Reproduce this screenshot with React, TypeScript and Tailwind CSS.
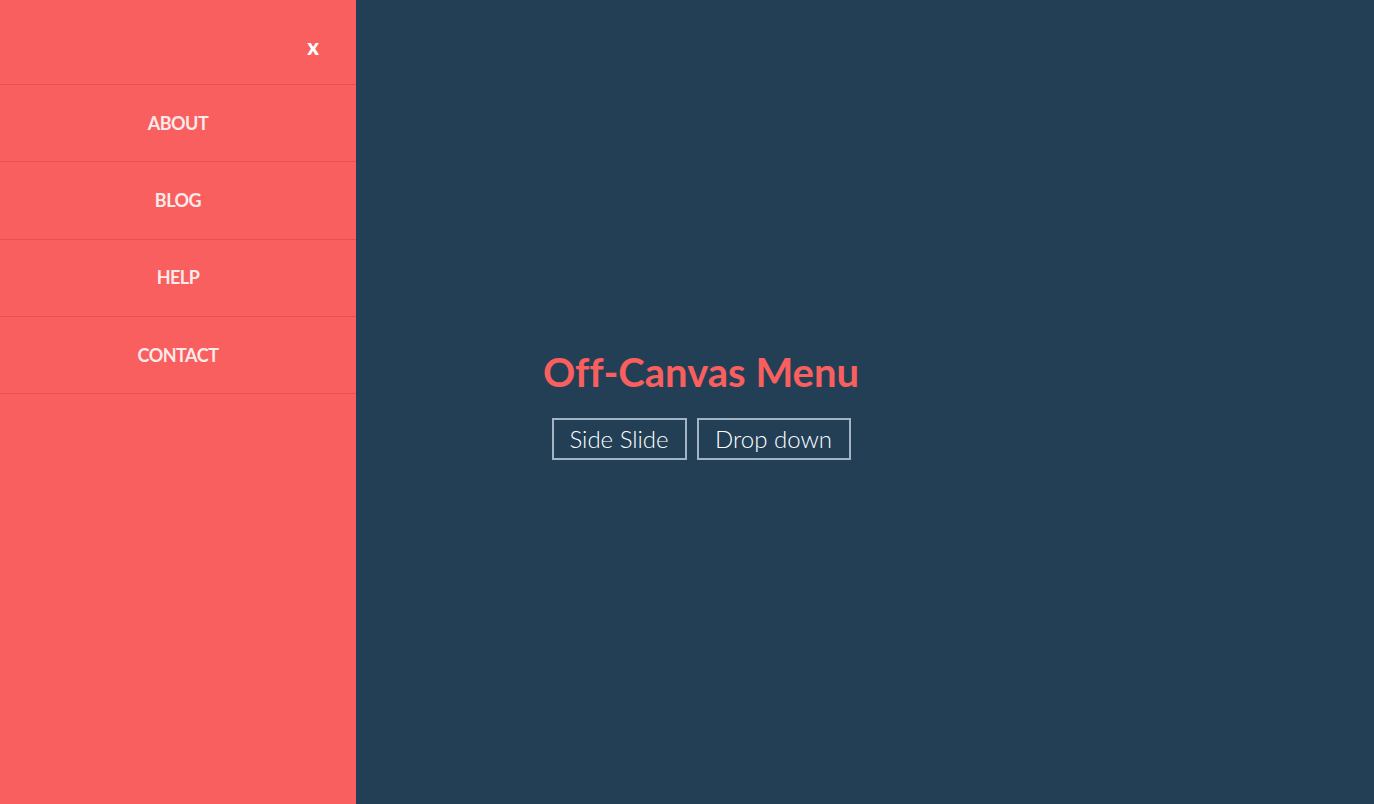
const links = ["ABOUT", "BLOG", "HELP", "CONTACT"];

const App = () => {
    return (
        <div className="flex h-screen w-full overflow-hidden font-['Lato','Liberation_Sans',sans-serif]">
            {/* off-canvas menu */}
            <aside className="w-[356px] shrink-0 bg-[#f95f5e]">
                <div className="flex h-[85px] items-center justify-end border-b border-[#e84f50] pr-[37px]">
                    <button className="pt-[10px] text-[22px] font-black leading-none text-white">x</button>
                </div>
                <ul>
                    {links.map((link) => (
                        <li key={link} className="flex h-[77.3px] items-center justify-center border-b border-[#e84f50]">
                            <a className="text-[18px] font-bold tracking-[-0.5px] text-[#fbeaea]">{link}</a>
                        </li>
                    ))}
                </ul>
            </aside>

            {/* page content */}
            <main className="flex flex-1 flex-col items-center justify-center bg-[#223f56] pr-[328px] pt-[8px]">
                <h1 className="text-[40px] font-bold leading-none text-[#f95f5e] [font-variant-ligatures:none]">Off-Canvas Menu</h1>
                <div className="mt-[26px] flex gap-[10px]">
                    <button className="h-[42px] w-[135px] border-2 border-[#a3b5c4] text-[24px] font-light text-white">Side Slide</button>
                    <button className="h-[42px] w-[154px] border-2 border-[#a3b5c4] text-[24px] font-light text-white">Drop down</button>
                </div>
            </main>
        </div>
    );
};

export default App;
